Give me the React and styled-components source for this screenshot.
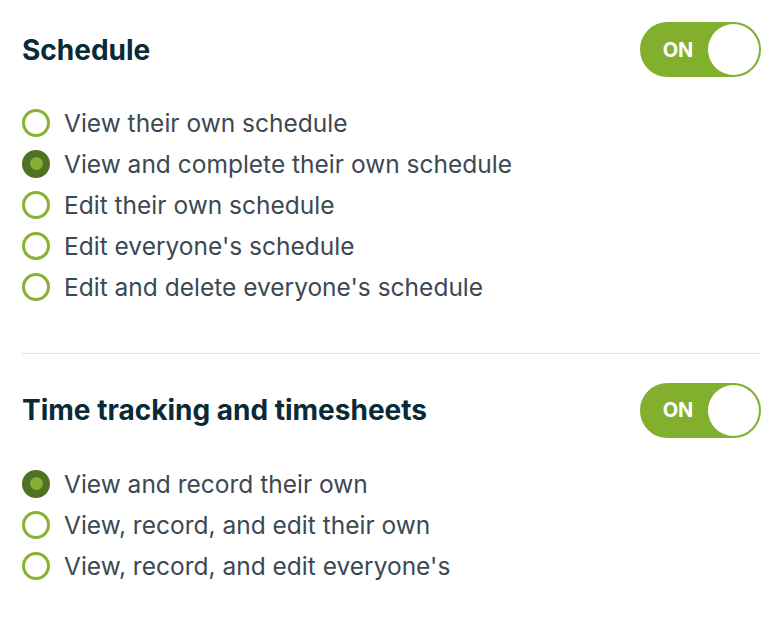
import React, { useState } from 'react';
import styled, { createGlobalStyle } from 'styled-components';

const GlobalStyle = createGlobalStyle`
  body {
    margin: 0;
    background: #fff;
    font-family: Inter, "Noto Sans", sans-serif;
  }
`;

const Page = styled.div`
  padding: 22px 15px 0 22px;
`;

const Section = styled.section`
  padding-bottom: ${({ $last }) => ($last ? '0' : '45px')};
  margin-bottom: ${({ $last }) => ($last ? '0' : '29px')};
  border-bottom: ${({ $last }) => ($last ? 'none' : '1px solid #e2e2e2')};
`;

const Header = styled.div`
  display: flex;
  justify-content: space-between;
  align-items: center;
  height: 55px;
  margin-bottom: 25px;
`;

const Title = styled.h2`
  margin: 0;
  font-size: 28px;
  font-weight: 700;
  color: #0b2a38;
  letter-spacing: 0;
`;

const Toggle = styled.button`
  display: flex;
  align-items: center;
  width: 121px;
  height: 55px;
  padding: 0;
  border: 2px solid #82b02e;
  border-radius: 28px;
  background: ${({ $on }) => ($on ? '#82b02e' : '#d7d7d7')};
  cursor: pointer;
  flex-direction: ${({ $on }) => ($on ? 'row' : 'row-reverse')};
`;

const ToggleLabel = styled.span`
  flex: 1;
  text-align: center;
  color: #fff;
  font-family: Inter, sans-serif;
  font-size: 20px;
  font-weight: 700;
  padding-left: 6px;
`;

const Knob = styled.span`
  width: 51px;
  height: 51px;
  border-radius: 50%;
  background: #fff;
`;

const Options = styled.div`
  display: flex;
  flex-direction: column;
`;

const Option = styled.label`
  display: flex;
  align-items: center;
  gap: 14px;
  height: 41.2px;
  cursor: pointer;
  font-size: 24.5px;
  color: #3d4952;
`;

const Radio = styled.span`
  box-sizing: border-box;
  width: 28px;
  height: 28px;
  border-radius: 50%;
  border: 3px solid ${({ $checked }) => ($checked ? '#4f7320' : '#86b230')};
  background: ${({ $checked }) => ($checked ? '#4f7320' : '#fff')};
  display: flex;
  align-items: center;
  justify-content: center;
  flex-shrink: 0;

  &::after {
    content: '';
    width: 13px;
    height: 13px;
    border-radius: 50%;
    background: #84b131;
    display: ${({ $checked }) => ($checked ? 'block' : 'none')};
  }
`;

const sections = [
  {
    title: 'Schedule',
    options: [
      'View their own schedule',
      'View and complete their own schedule',
      'Edit their own schedule',
      "Edit everyone's schedule",
      "Edit and delete everyone's schedule",
    ],
    selected: 1,
  },
  {
    title: 'Time tracking and timesheets',
    options: [
      'View and record their own',
      'View, record, and edit their own',
      "View, record, and edit everyone's",
    ],
    selected: 0,
  },
];

function PermissionSection({ section, last }) {
  const [on, setOn] = useState(true);
  const [selected, setSelected] = useState(section.selected);

  return (
    <Section $last={last}>
      <Header>
        <Title>{section.title}</Title>
        <Toggle $on={on} onClick={() => setOn(!on)}>
          <ToggleLabel>{on ? 'ON' : 'OFF'}</ToggleLabel>
          <Knob />
        </Toggle>
      </Header>
      <Options>
        {section.options.map((opt, i) => (
          <Option key={opt} onClick={() => setSelected(i)}>
            <Radio $checked={selected === i} />
            {opt}
          </Option>
        ))}
      </Options>
    </Section>
  );
}

export default function App() {
  return (
    <Page>
      <GlobalStyle />
      {sections.map((s, i) => (
        <PermissionSection key={s.title} section={s} last={i === sections.length - 1} />
      ))}
    </Page>
  );
}
